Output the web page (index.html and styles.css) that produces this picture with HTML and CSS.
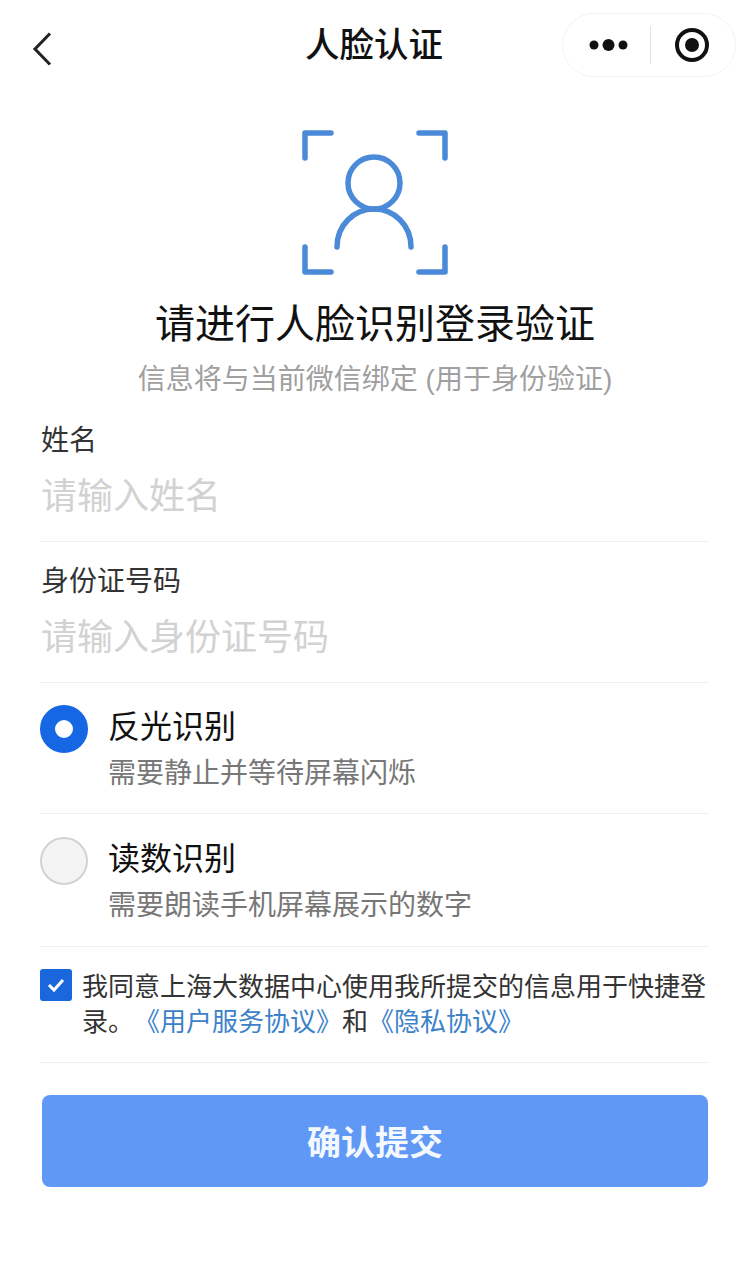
FILE: index.html
```html
<!DOCTYPE html>
<html lang="zh-CN">

<head>
    <meta charset="UTF-8">
    <meta name="viewport" content="width=device-width, initial-scale=1.0">
    <link rel="stylesheet" href="styles.css">
    <title>人脸认证</title>
</head>

<body>

    <div class="navBar">
        <svg class="backIcon" width="20" height="34" viewBox="0 0 20 34">
            <path d="M18 1.5 L3 17 L18 32.5" fill="none" stroke="#222" stroke-width="3" />
        </svg>
        <div class="navTitle">人脸认证</div>
        <div class="capsule">
            <svg class="moreIcon" width="40" height="14" viewBox="0 0 40 14">
                <circle cx="5" cy="7" r="4.5" fill="#111" />
                <circle cx="19.5" cy="7" r="6" fill="#111" />
                <circle cx="34" cy="7" r="4.5" fill="#111" />
            </svg>
            <span class="capsuleLine"></span>
            <svg class="targetIcon" width="34" height="34" viewBox="0 0 34 34">
                <circle cx="17" cy="17" r="15" fill="none" stroke="#111" stroke-width="4" />
                <circle cx="17" cy="17" r="7" fill="#111" />
            </svg>
        </div>
    </div>

    <div class="head">
        <svg class="faceIcon" width="146" height="146" viewBox="0 0 146 146">
            <g fill="none" stroke="#4a8ad8" stroke-width="5.5" stroke-linecap="round" stroke-linejoin="round">
                <path d="M3 29 V4 H29" />
                <path d="M117 4 H143 V29" />
                <path d="M3 118 V143 H29" />
                <path d="M117 143 H143 V118" />
                <circle cx="72" cy="54" r="26" />
                <path d="M35 118 C35 96 52 80 72 80 C92 80 109 96 109 118" />
            </g>
        </svg>
        <h1 class="headTitle">请进行人脸识别登录验证</h1>
        <p class="headSub">信息将与当前微信绑定 (用于身份验证)</p>
    </div>

    <div class="form">
        <div class="field firstField">
            <div class="fieldLabel">姓名</div>
            <div class="fieldInput">请输入姓名</div>
        </div>
        <div class="field">
            <div class="fieldLabel">身份证号码</div>
            <div class="fieldInput">请输入身份证号码</div>
        </div>

        <div class="option">
            <span class="radio radioOn"></span>
            <div>
                <div class="optionTitle">反光识别</div>
                <div class="optionSub">需要静止并等待屏幕闪烁</div>
            </div>
        </div>
        <div class="option optionLast">
            <span class="radio"></span>
            <div>
                <div class="optionTitle">读数识别</div>
                <div class="optionSub">需要朗读手机屏幕展示的数字</div>
            </div>
        </div>

        <div class="agree">
            <span class="checkbox">
                <svg width="20" height="16" viewBox="0 0 20 16">
                    <path d="M3 8 L8 13 L17 3" fill="none" stroke="#fff" stroke-width="3" />
                </svg>
            </span>
            <div class="agreeText">
                <div>我同意上海大数据中心使用我所提交的信息用于快捷登</div>
                <div>录。<a class="link">《用户服务协议》</a>和<a class="link">《隐私协议》</a></div>
            </div>
        </div>

        <div class="submit">确认提交</div>
    </div>

</body>

</html>
```

FILE: styles.css
```css
* {
    margin: 0;
    padding: 0;
    box-sizing: border-box;
}

html,
body {
    height: 1264px;
    overflow: hidden;
}

body {
    background-color: #fff;
    color: #111;
    font-family: "Liberation Sans", "Noto Sans CJK SC", sans-serif;
    text-spacing-trim: space-all;
}

.navBar {
    height: 90px;
    display: flex;
    align-items: center;
    justify-content: space-between;
    padding: 0 14px 0 32px;
    position: relative;
}

.backIcon {
    margin-top: 8px;
}

.navTitle {
    position: absolute;
    left: 0;
    right: 2px;
    top: 23px;
    text-align: center;
    font-size: 34.5px;
    line-height: 44px;
    font-weight: 500;
}

.capsule {
    width: 174px;
    height: 64px;
    border: 1px solid #f3f3f3;
    border-radius: 32px;
    display: flex;
    align-items: center;
    padding-left: 26px;
}

.capsuleLine {
    width: 1px;
    height: 38px;
    margin: 0 24px 0 21px;
    background-color: #e4e4e4;
}

.head {
    display: flex;
    flex-direction: column;
    align-items: center;
    padding-top: 39px;
}

.headTitle {
    margin-top: 21px;
    font-size: 40px;
    line-height: 56px;
    font-weight: 400;
}

.headSub {
    margin-top: 10px;
    font-size: 28px;
    line-height: 36px;
    color: #a0a0a0;
}

.form {
    padding: 0 41px 0 40px;
}

.field {
    height: 141px;
    padding: 22px 0 0 1px;
    border-bottom: 1px solid #f0f0f0;
}

.firstField {
    height: 144px;
    padding-top: 25px;
}

.fieldLabel {
    font-size: 28px;
    line-height: 36px;
    color: #333;
}

.fieldInput {
    margin-top: 13px;
    font-size: 36px;
    line-height: 50px;
    color: #d2d2d2;
}

.option {
    display: flex;
    gap: 20px;
    height: 131px;
    padding-top: 22px;
    border-bottom: 1px solid #f0f0f0;
}

.optionLast {
    height: 133px;
    padding-top: 23px;
}

.radio {
    flex: none;
    width: 48px;
    height: 48px;
    border: 2px solid #d2d2d2;
    border-radius: 50%;
    background-color: #f4f4f4;
}

.radioOn {
    border: 15px solid #1667e4;
    background-color: #fff;
}

.optionTitle {
    font-size: 32px;
    line-height: 44px;
}

.optionSub {
    margin-top: 5px;
    font-size: 28px;
    line-height: 40px;
    color: #777;
}

.agree {
    display: flex;
    gap: 10px;
    height: 116px;
    padding-top: 23px;
    border-bottom: 1px solid #f0f0f0;
}

.checkbox {
    flex: none;
    width: 32px;
    height: 32px;
    margin-top: -1px;
    border-radius: 3px;
    background-color: #1a66dc;
    display: flex;
    align-items: center;
    justify-content: center;
}

.agreeText {
    font-size: 26px;
    line-height: 35px;
    color: #333;
    white-space: nowrap;
}

.link {
    color: #3d82c8;
}

.submit {
    height: 92px;
    margin: 32px 1px 0 2px;
    border-radius: 8px;
    background-color: #5f98f5;
    color: #f4f8ff;
    font-size: 34px;
    font-weight: 700;
    line-height: 96px;
    text-align: center;
}
```
